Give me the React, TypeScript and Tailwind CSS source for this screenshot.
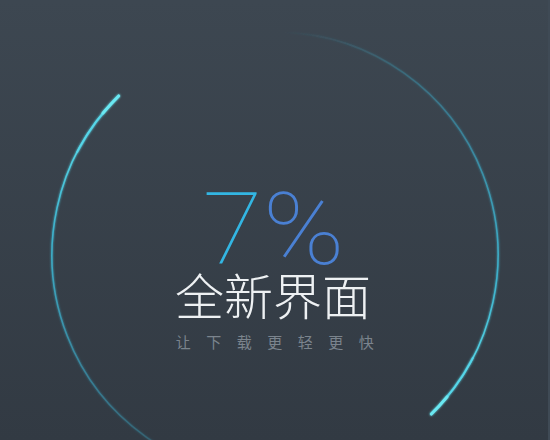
import React from 'react';

const CX = 275;
const CY = 255;
const R = 223;

const pt = (deg: number) => {
    const a = (deg * Math.PI) / 180;
    return [CX + R * Math.cos(a), CY + R * Math.sin(a)];
};

// comet-like arc: faint tail, bright thicker head
function Arc({ id, from, to }: { id: string; from: number; to: number }) {
    const [x0, y0] = pt(from);
    const [x1, y1] = pt(to);
    const [hx, hy] = pt(to - 18);
    const [mx, my] = pt(to - 6);
    return (
        <g>
            <defs>
                <linearGradient id={id} gradientUnits="userSpaceOnUse" x1={x0} y1={y0} x2={x1} y2={y1}>
                    <stop offset="0" stopColor="#3fb9d6" stopOpacity="0" />
                    <stop offset="0.35" stopColor="#3aa9c8" stopOpacity="0.45" />
                    <stop offset="0.75" stopColor="#3fbcd8" stopOpacity="0.85" />
                    <stop offset="1" stopColor="#5fe3ef" stopOpacity="1" />
                </linearGradient>
            </defs>
            <path d={`M${x0} ${y0} A${R} ${R} 0 0 1 ${x1} ${y1}`} stroke={`url(#${id})`} strokeWidth="1.6" fill="none" />
            <path d={`M${hx} ${hy} A${R} ${R} 0 0 1 ${x1} ${y1}`} stroke="#55d6ea" strokeOpacity="0.7" strokeWidth="2.2" fill="none" strokeLinecap="round" />
            <path d={`M${mx} ${my} A${R} ${R} 0 0 1 ${x1} ${y1}`} stroke="#6ae8f2" strokeWidth="3" fill="none" strokeLinecap="round" />
        </g>
    );
}

export default function App() {
    return (
        <div className="relative w-[550px] h-[440px] overflow-hidden bg-gradient-to-b from-[#3d4751] to-[#323a43]">
            <svg className="absolute inset-0" width="550" height="440" viewBox="0 0 550 440">
                <defs>
                    <filter id="glow" x="-20%" y="-20%" width="140%" height="140%">
                        <feGaussianBlur stdDeviation="1" result="b" />
                        <feMerge>
                            <feMergeNode in="b" />
                            <feMergeNode in="SourceGraphic" />
                        </feMerge>
                    </filter>
                </defs>
                <g filter="url(#glow)">
                    <Arc id="arcR" from={-88} to={45.5} />
                    <Arc id="arcL" from={92} to={225.5} />
                </g>
            </svg>
            <div className="absolute right-0 top-0 h-full w-[2px] bg-[#3f4a55]" />

            <div className="relative flex flex-col items-center pt-[188px] font-['Noto_Sans_CJK_SC',sans-serif]">
                <div className="font-['Roboto','Noto_Sans',sans-serif] font-thin text-[100px] leading-[84px] scale-x-[1.1] ml-[-2px]">
                    <span className="text-[#33b6e3]">7</span>
                    <span className="text-[#4a80d3]">%</span>
                </div>
                <div className="mt-[-3px] text-[49px] leading-[50px] font-extralight text-[#eef1f3] mr-[4px]">
                    全新界面
                </div>
                <div className="mt-[13px] text-[15px] leading-[20px] text-[#7b848d] tracking-[15.5px] ml-[15px]">
                    让下载更轻更快
                </div>
            </div>
        </div>
    );
}
